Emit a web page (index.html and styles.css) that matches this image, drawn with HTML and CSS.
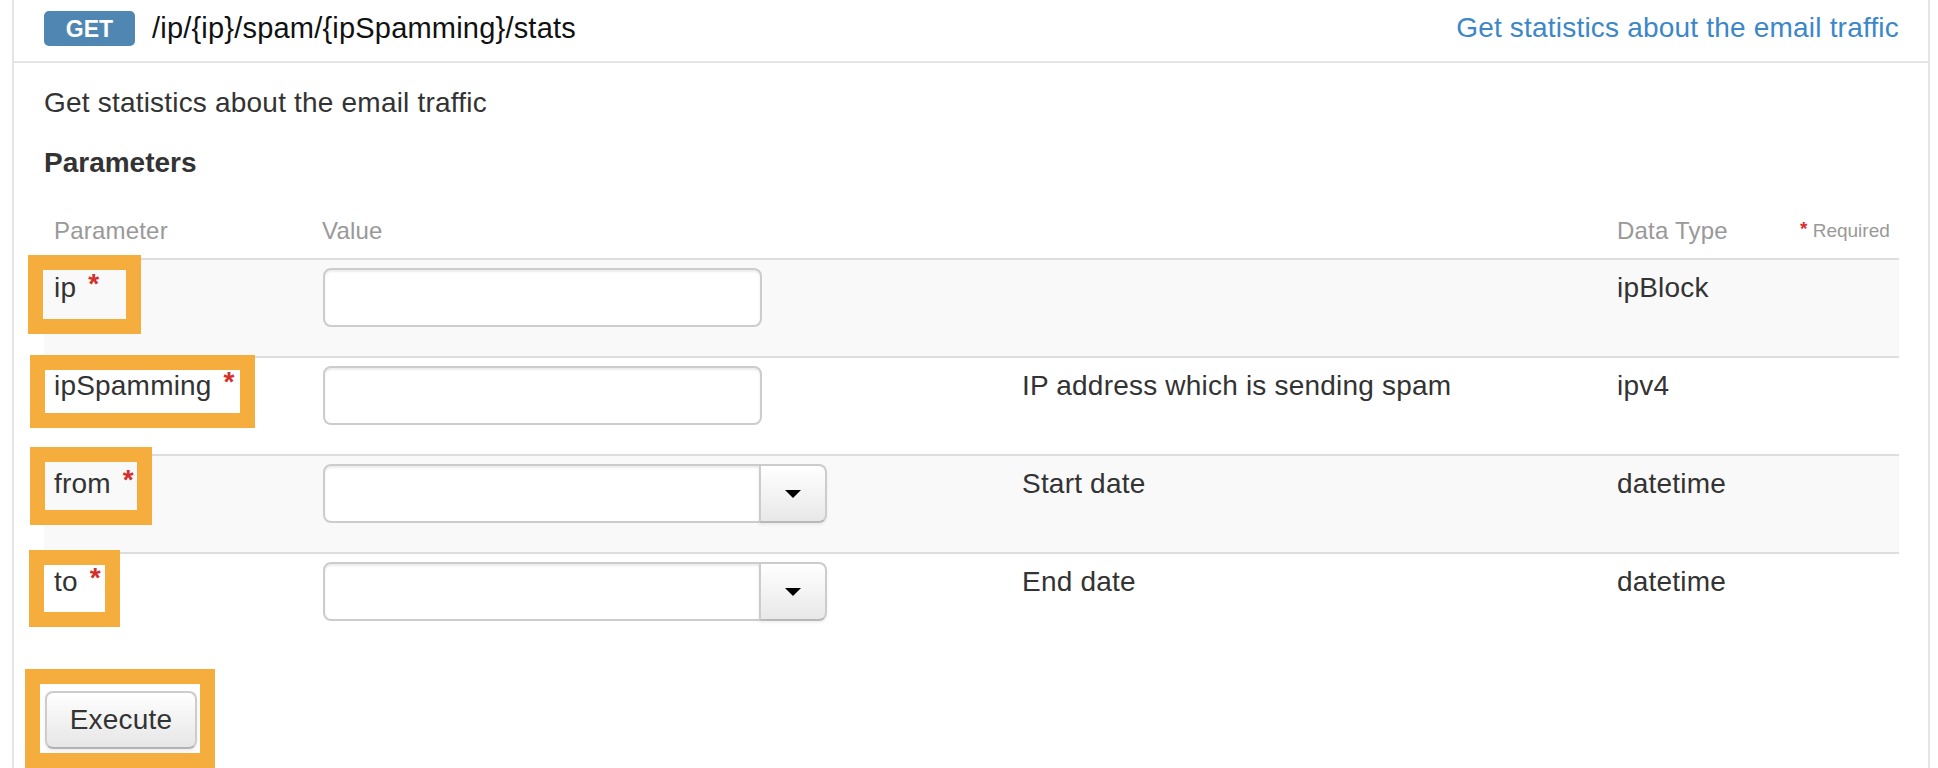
FILE: index.html
```html
<!DOCTYPE html>
<html lang="en">
<head>
<meta charset="utf-8">
<title>GET /ip/{ip}/spam/{ipSpamming}/stats</title>
<link rel="stylesheet" href="styles.css">
</head>
<body>
<div class="panel">
  <div class="op-header">
    <span class="verb">GET</span>
    <span class="path">/ip/{ip}/spam/{ipSpamming}/stats</span>
    <a class="summary" href="#">Get statistics about the email traffic</a>
  </div>
  <div class="op-body">
    <p class="desc">Get statistics about the email traffic</p>
    <h4 class="params-title">Parameters</h4>
    <table class="params">
      <colgroup>
        <col class="c-name">
        <col class="c-value">
        <col class="c-desc">
        <col class="c-type">
        <col class="c-req">
      </colgroup>
      <thead>
        <tr>
          <th>Parameter</th>
          <th>Value</th>
          <th></th>
          <th>Data Type</th>
          <th class="req-head"><span class="req req-small">*</span> Required</th>
        </tr>
      </thead>
      <tbody>
        <tr class="odd">
          <td class="pname"><span class="hl hl-1"></span>ip <span class="req">*</span></td>
          <td><input class="field" type="text"></td>
          <td></td>
          <td>ipBlock</td>
          <td></td>
        </tr>
        <tr>
          <td class="pname"><span class="hl hl-2"></span>ipSpamming <span class="req">*</span></td>
          <td><input class="field" type="text"></td>
          <td>IP address which is sending spam</td>
          <td>ipv4</td>
          <td></td>
        </tr>
        <tr class="odd">
          <td class="pname"><span class="hl hl-3"></span>from <span class="req">*</span></td>
          <td>
            <div class="input-group">
              <input class="field field-group" type="text">
              <button class="drop-btn" type="button"><span class="caret"></span></button>
            </div>
          </td>
          <td>Start date</td>
          <td>datetime</td>
          <td></td>
        </tr>
        <tr>
          <td class="pname"><span class="hl hl-4"></span>to <span class="req">*</span></td>
          <td>
            <div class="input-group">
              <input class="field field-group" type="text">
              <button class="drop-btn" type="button"><span class="caret"></span></button>
            </div>
          </td>
          <td>End date</td>
          <td>datetime</td>
          <td></td>
        </tr>
      </tbody>
    </table>
    <div class="actions">
      <button class="btn" type="button">Execute</button>
      <span class="hl hl-exec"></span>
    </div>
  </div>
</div>
</body>
</html>
```

FILE: styles.css
```css
html, body {
  margin: 0;
  padding: 0;
  height: 100%;
  overflow: hidden;
  background: #ffffff;
}

body {
  font-family: "Liberation Sans", Arial, Helvetica, sans-serif;
  font-size: 28px;
  line-height: 40px;
  letter-spacing: 0.2px;
  color: #333333;
}

.panel {
  box-sizing: border-box;
  margin-left: 12px;
  width: 1918px;
  min-height: 100vh;
  border-left: 2px solid #e5e5e5;
  border-right: 2px solid #e5e5e5;
}

.op-header {
  display: flex;
  align-items: center;
  height: 40px;
  padding: 8px 29px 13px 30px;
  border-bottom: 2px solid #e5e5e5;
}

.verb {
  display: inline-block;
  width: 91px;
  height: 35px;
  line-height: 37px;
  border-radius: 5px;
  background: #4f87b2;
  color: #ffffff;
  font-size: 23px;
  font-weight: bold;
  letter-spacing: 0;
  text-align: center;
}

.path {
  margin-left: 17px;
  font-size: 29px;
  color: #111111;
}

.summary {
  margin-left: auto;
  color: #3b87c9;
  text-decoration: none;
}

.op-body {
  padding: 0 29px 0 30px;
}

.desc {
  margin: 20px 0 0;
}

.params-title {
  margin: 20px 0 0;
  font-size: 28px;
  line-height: 40px;
  font-weight: bold;
  letter-spacing: 0;
}

.params {
  width: 100%;
  margin-top: 23px;
  table-layout: fixed;
  border-collapse: separate;
  border-spacing: 0;
}

.c-name { width: 268px; }
.c-value { width: 700px; }
.c-desc { width: 595px; }
.c-type { width: 183px; }
.c-req { width: 109px; }

.params th {
  padding: 8px 10px 10px;
  font-size: 24px;
  line-height: 34px;
  font-weight: normal;
  color: #999999;
  text-align: left;
}

.params th.req-head {
  font-size: 19px;
  letter-spacing: 0;
  white-space: nowrap;
}

.params td {
  position: relative;
  padding: 8px 10px 29px;
  border-top: 2px solid #dddddd;
  vertical-align: top;
  line-height: 40px;
}

.params tr.odd td {
  background: #f9f9f9;
}

.req {
  position: relative;
  top: -4px;
  margin-left: 4px;
  color: #d3302c;
  font-weight: bold;
}

.req-small {
  top: -2px;
  margin-left: 0;
}

.field {
  box-sizing: border-box;
  display: block;
  width: 439px;
  height: 59px;
  margin: 0 0 0 1px;
  padding: 8px 12px;
  border: 2px solid #cccccc;
  border-radius: 8px;
  background: #ffffff;
  box-shadow: inset 0 2px 2px rgba(0, 0, 0, 0.075);
  font: inherit;
  outline: none;
}

.input-group {
  display: flex;
  margin-left: 1px;
}

.field-group {
  width: 438px;
  margin: 0;
  border-radius: 8px 0 0 8px;
}

.drop-btn {
  box-sizing: border-box;
  width: 68px;
  height: 59px;
  margin-left: -2px;
  padding: 0;
  display: flex;
  align-items: center;
  justify-content: center;
  border: 2px solid #cccccc;
  border-bottom-color: #b8b8b8;
  border-radius: 0 8px 8px 0;
  background: linear-gradient(#ffffff, #e8e8e8);
  box-shadow: 0 2px 3px rgba(0, 0, 0, 0.06);
}

.caret {
  display: block;
  width: 0;
  height: 0;
  border-top: 8px solid #000000;
  border-left: 8px solid transparent;
  border-right: 8px solid transparent;
}

.actions {
  position: relative;
  margin-top: 41px;
  padding-left: 1px;
}

.btn {
  box-sizing: border-box;
  width: 152px;
  height: 58px;
  padding: 0;
  border: 2px solid #cccccc;
  border-bottom-color: #b3b3b3;
  border-radius: 8px;
  background: linear-gradient(#ffffff, #e6e6e6);
  box-shadow: inset 0 2px 0 rgba(255, 255, 255, 0.2), 0 2px 4px rgba(0, 0, 0, 0.08);
  font-family: "Liberation Sans", Arial, Helvetica, sans-serif;
  font-size: 28px;
  line-height: 40px;
  letter-spacing: 0.2px;
  color: #333333;
}

/* orange annotation highlights laid over the labels */
.hl {
  position: absolute;
  box-sizing: border-box;
  border: 15px solid #f5ad3e;
  z-index: 2;
  pointer-events: none;
}

.hl-1 { left: -16px; top: -5px; width: 113px; height: 79px; }
.hl-2 { left: -14px; top: -3px; width: 225px; height: 73px; }
.hl-3 { left: -14px; top: -9px; width: 122px; height: 78px; }
.hl-4 { left: -15px; top: -4px; width: 91px; height: 77px; }
.hl-exec { left: -19px; top: -22px; width: 190px; height: 99px; }
```
